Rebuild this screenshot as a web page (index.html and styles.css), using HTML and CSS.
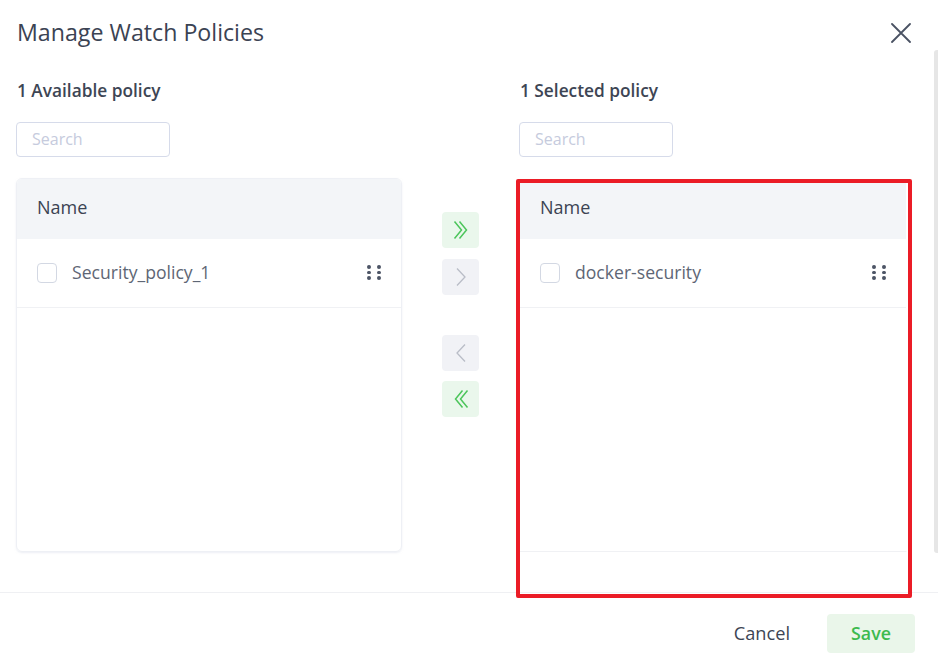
FILE: index.html
```html
<!DOCTYPE html>
<html>
<head>
<meta charset="utf-8">
<link rel="stylesheet" href="styles.css">
</head>
<body>
<div class="modal">
  <div class="header">
    <h1 class="title">Manage Watch Policies</h1>
    <button class="close" aria-label="Close">
      <svg width="20" height="20" viewBox="0 0 20 20"><path d="M1 1 L19 19 M19 1 L1 19" stroke="#4a5263" stroke-width="1.8" fill="none" stroke-linecap="round"/></svg>
    </button>
  </div>
  <div class="body">
    <div class="col">
      <div class="label">1 Available policy</div>
      <div class="search">Search</div>
      <div class="panel">
        <div class="phead">Name</div>
        <div class="row">
          <span class="check"></span>
          <span class="rtext">Security_policy_1</span>
          <span class="dots"><i></i><i></i><i></i><i></i><i></i><i></i></span>
        </div>
      </div>
    </div>
    <div class="mid">
      <div class="btn green b1"><svg width="20" height="20" viewBox="0 0 20 20"><path d="M3.5 1.5 L10.5 10 L3.5 18.5 M8.5 1.5 L15.5 10 L8.5 18.5" stroke="#4cc55b" stroke-width="1.5" fill="none"/></svg></div>
      <div class="btn grey b2"><svg width="20" height="20" viewBox="0 0 20 20"><path d="M6 1.5 L14 10 L6 18.5" stroke="#b9bdc7" stroke-width="1.3" fill="none"/></svg></div>
      <div class="btn grey b3"><svg width="20" height="20" viewBox="0 0 20 20"><path d="M14 1.5 L6 10 L14 18.5" stroke="#b9bdc7" stroke-width="1.3" fill="none"/></svg></div>
      <div class="btn green b4"><svg width="20" height="20" viewBox="0 0 20 20"><path d="M16.5 1.5 L9.5 10 L16.5 18.5 M11.5 1.5 L4.5 10 L11.5 18.5" stroke="#4cc55b" stroke-width="1.5" fill="none"/></svg></div>
    </div>
    <div class="col">
      <div class="label">1 Selected policy</div>
      <div class="search">Search</div>
      <div class="panel right">
        <div class="phead">Name</div>
        <div class="row">
          <span class="check"></span>
          <span class="rtext">docker-security</span>
          <span class="dots"><i></i><i></i><i></i><i></i><i></i><i></i></span>
        </div>
      </div>
    </div>
  </div>
  <div class="footer">
    <button class="cancel">Cancel</button>
    <button class="save">Save</button>
  </div>
  <div class="highlight"></div>
  <div class="scrollbar"></div>
</div>
</body>
</html>
```
FILE: styles.css
```css
* { box-sizing: border-box; }
html, body { margin: 0; padding: 0; background: #fff; }
body { font-family: "Open Sans", "Liberation Sans", sans-serif; color: #3d4554; width: 938px; height: 669px; overflow: hidden; }
.modal { position: relative; width: 938px; height: 669px; }
.header { display: flex; align-items: center; justify-content: space-between; padding: 15px 27px 0 17px; height: 48px; }
.title { margin: 0; font-size: 23.2px; font-weight: 400; line-height: 30px; color: #3b4353; }
.close { background: none; border: 0; padding: 0; width: 20px; height: 20px; cursor: pointer; display: flex; margin-top: 2px; }
.body { display: grid; grid-template-columns: 386px 117px 388px; padding: 0 0 0 16px; margin-top: 31px; }
.col { display: flex; flex-direction: column; }
.label { font-size: 17.3px; font-weight: 600; line-height: 24px; color: #3d4554; padding-left: 1px; }
.search { margin-top: 19px; width: 154px; height: 35px; border: 1px solid #d6dbea; border-radius: 4px; padding: 0 15px; font-size: 16px; line-height: 33px; color: #c6cbdd; }
.panel { margin-top: 21px; height: 374px; border: 1px solid #eef0f5; border-radius: 6px; overflow: hidden; box-shadow: 0 1px 2px rgba(220,224,236,0.5); }
.panel.right { border-color: transparent; border-bottom-color: #f0f1f4; border-radius: 0; box-shadow: none; }
.phead { height: 60px; background: #f3f5f8; font-size: 18px; font-weight: 500; line-height: 56px; padding-left: 20px; color: #3b4353; }
.row { height: 69px; display: flex; align-items: center; padding: 0 20px 3px 20px; border-bottom: 1px solid #f0f1f4; }
.check { width: 20px; height: 20px; border: 1px solid #d3d8e3; border-radius: 4px; flex: none; margin-top: 2px; }
.rtext { margin-left: 15px; font-size: 17.6px; color: #5e6675; flex: 1; }
.dots { display: grid; grid-template-columns: 4px 4px; column-gap: 6px; row-gap: 2px; margin-top: 2px; }
.dots i { display: block; width: 3.8px; height: 3.8px; border-radius: 50%; background: #4d5566; }
.mid { display: flex; flex-direction: column; align-items: center; padding-top: 133px; }
.btn { width: 37px; height: 36px; border-radius: 4px; display: flex; align-items: center; justify-content: center; }
.btn.green { background: #eaf7ec; }
.btn.grey { background: #f1f2f6; }
.b2 { margin-top: 11px; }
.b3 { margin-top: 40px; }
.b4 { margin-top: 10px; }
.footer { position: absolute; left: 0; right: 0; top: 592px; border-top: 1px solid #eff0f3; display: flex; justify-content: flex-end; align-items: center; padding: 21px 23px 0 0; gap: 37px; }
.cancel { background: none; border: 0; font-family: inherit; font-size: 18.2px; color: #3d4554; padding: 0; margin-top: -2px; }
.save { width: 88px; height: 39px; border: 0; border-radius: 4px; background: #eaf6ea; color: #3dba4e; font-family: inherit; font-size: 17.8px; font-weight: 600; padding: 0 0 2px; }
.highlight { position: absolute; left: 516px; top: 179px; width: 396px; height: 419px; border: 4px solid #eb1c26; border-radius: 2px; pointer-events: none; }
.scrollbar { position: absolute; left: 934px; top: 50px; width: 5px; height: 503px; background: #e6e6e6; border-radius: 3px 0 0 3px; }
```
